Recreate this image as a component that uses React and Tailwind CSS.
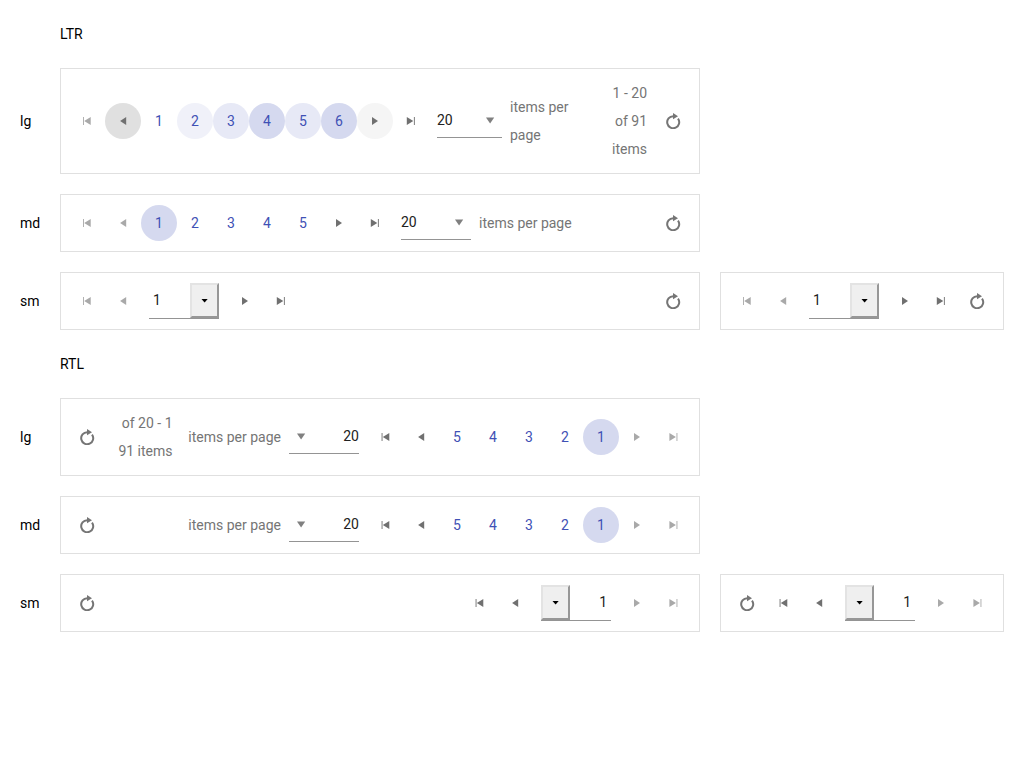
import React from "react";

const shapes = {
  prev: <path d="M11.2 4v8L5.1 8z" />,
  next: <path d="M5 4v8l6-4z" />,
  first: <path className="rtl:translate-x-[0.6px]" d="M4 4h.9v8H4zM11.7 4v8L5.2 8z" />,
  last: <path className="rtl:translate-x-[0.6px]" d="M10.9 4h.9v8h-.9zM3.8 4v8l6.5-4z" />,
  down: <path d="M4 5.4h8.2L8.1 11.4z" />,
  caret: <path d="M4.5 6h6.2L7.6 9.4z" />,
};

function Icon({ name, className = "" }) {
  return (
    <svg viewBox="0 0 16 16" fill="currentColor" className={`size-4 shrink-0 ${className}`}>
      {shapes[name]}
    </svg>
  );
}

function Nav({ name, disabled, bg = "" }) {
  return (
    <button className={`flex size-9 shrink-0 items-center justify-center rounded-full ${bg} ${disabled ? "text-[#a9a9a9]" : "text-[#707070]"}`}>
      <Icon name={name} />
    </button>
  );
}

function Page({ n, bg = "" }) {
  return (
    <button className={`flex size-9 shrink-0 items-center justify-center rounded-full text-[#3f51b5] ${bg}`}>{n}</button>
  );
}

function Reload() {
  return (
    <button className="flex size-9 shrink-0 items-center justify-center text-[#757575]">
      <svg viewBox="0 0 16 16" className="size-4">
        <path d="M8.2 3.2A6 6 0 1 0 13 5.6" fill="none" stroke="currentColor" strokeWidth="2" />
        <path d="M8 0l5 3.2L8 6.2z" fill="currentColor" />
      </svg>
    </button>
  );
}

function Sizes({ width = "w-[70px]" }) {
  return (
    <div className={`mx-2 mb-px flex h-[35px] shrink-0 items-center justify-between border-b border-[#949494] ${width}`}>
      <span className="text-[#212121]">20</span>
      <Icon name="down" className="me-1 text-[#808080]" />
    </div>
  );
}

function Select() {
  return (
    <div className="mx-2 flex h-9 w-[70px] shrink-0 items-stretch justify-between border-b border-[#949494]">
      <span className="flex items-center ps-1 pb-0.5 text-[#212121]">1</span>
      <span className="flex w-[29px] items-center justify-center border-2 border-t-[#e3e3e3] border-r-[#979797] border-b-[#979797] border-l-[#e3e3e3] bg-[#efefef] text-black">
        <Icon name="caret" />
      </span>
    </div>
  );
}

function Pager({ className = "w-[640px]", children }) {
  return (
    <div className={`flex shrink-0 items-center border border-[#e0e0e0] px-2 py-2.5 leading-7 ${className}`}>{children}</div>
  );
}

function Row({ label, children }) {
  return (
    <div className="flex items-center">
      <div className="w-10 shrink-0">{label}</div>
      <div className="flex gap-5">{children}</div>
    </div>
  );
}

function Numbers() {
  return (
    <>
      <Page n={1} bg="bg-[#d5d9ef]" />
      <Page n={2} />
      <Page n={3} />
      <Page n={4} />
      <Page n={5} />
    </>
  );
}

function SmallPager({ rtl, className }) {
  return (
    <Pager className={className}>
      <Nav name={rtl ? "last" : "first"} disabled />
      <Nav name={rtl ? "next" : "prev"} disabled />
      <Select />
      <Nav name={rtl ? "prev" : "next"} />
      <Nav name={rtl ? "first" : "last"} />
      <div className="grow" />
      <Reload />
    </Pager>
  );
}

function MediumPager({ rtl, info }) {
  return (
    <Pager>
      <Nav name={rtl ? "last" : "first"} disabled />
      <Nav name={rtl ? "next" : "prev"} disabled />
      <Numbers />
      <Nav name={rtl ? "prev" : "next"} />
      <Nav name={rtl ? "first" : "last"} />
      <Sizes />
      <span className="whitespace-nowrap text-[#757575]">items per page</span>
      <div className="grow" />
      {info}
      <Reload />
    </Pager>
  );
}

export default function App() {
  return (
    <div className="flex h-[768px] w-[1024px] flex-col gap-5 overflow-hidden bg-white pt-5 pl-5 font-['Roboto',sans-serif] text-sm leading-7 text-black">
      <div className="h-7 pl-10">LTR</div>
      <Row label="lg">
        <Pager>
          <Nav name="first" disabled />
          <Nav name="prev" bg="bg-[#e0e0e0]" />
          <Page n={1} />
          <Page n={2} bg="bg-[#f0f1f9]" />
          <Page n={3} bg="bg-[#e7e9f6]" />
          <Page n={4} bg="bg-[#d5d9ef]" />
          <Page n={5} bg="bg-[#e7e9f6]" />
          <Page n={6} bg="bg-[#d5d9ef]" />
          <Nav name="next" bg="bg-[#f5f5f5]" />
          <Nav name="last" />
          <Sizes width="w-[65px]" />
          <span className="w-[65px] text-[#757575]">items per page</span>
          <div className="grow" />
          <span className="me-2 w-10 text-right text-[#757575]">1 - 20 of 91 items</span>
          <Reload />
        </Pager>
      </Row>
      <Row label="md">
        <MediumPager />
      </Row>
      <Row label="sm">
        <SmallPager className="w-[640px]" />
        <SmallPager className="w-[284px]" />
      </Row>
      <div className="h-7 pl-10">RTL</div>
      <Row label="lg">
        <div dir="rtl">
          <MediumPager
            rtl
            info={<span className="me-2 w-[59.5px] text-right text-[#757575]">1 - 20 of 91 items</span>}
          />
        </div>
      </Row>
      <Row label="md">
        <div dir="rtl">
          <MediumPager rtl />
        </div>
      </Row>
      <Row label="sm">
        <div dir="rtl">
          <SmallPager rtl className="w-[640px]" />
        </div>
        <div dir="rtl">
          <SmallPager rtl className="w-[284px]" />
        </div>
      </Row>
    </div>
  );
}
